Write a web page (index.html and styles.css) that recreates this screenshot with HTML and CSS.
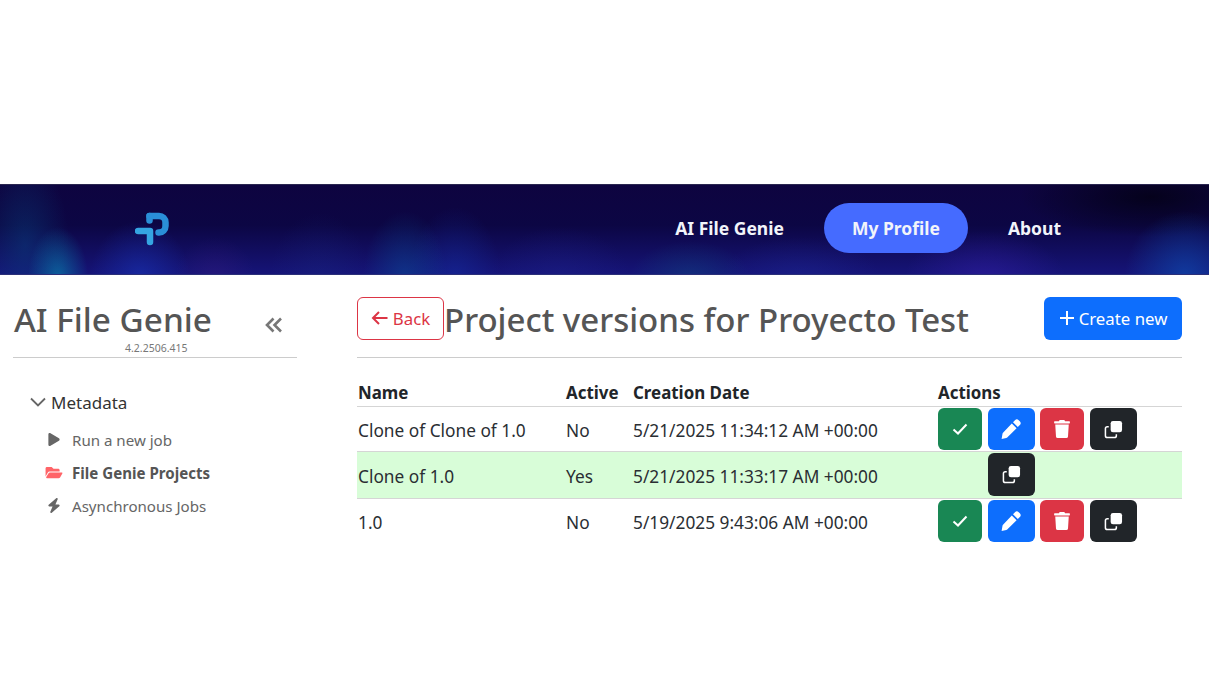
FILE: index.html
```html
<!DOCTYPE html>
<html>
<head>
<meta charset="utf-8">
<title>AI File Genie</title>
<link rel="stylesheet" href="styles.css">
</head>

<body>
<div class="top_bar">
	<svg class="logo" viewBox="0 0 34 34" width="34" height="34">
		<path class="logo_p" d="M14.500 4H24a6.500 6.500 0 0 1 6.500 6.500v3.500a6.500 6.500 0 0 1-6.500 6.500h-.5" />
		<path class="logo_p" d="M14.500 4V8.500" />
		<path class="logo_t" d="M3 19H15V30" />
	</svg>
	<ul class="nav">
		<li><a href="#">AI File Genie</a></li>
		<li class="on"><a href="#">My Profile</a></li>
		<li><a href="#">About</a></li>
	</ul>
</div>

<div class="wrap">
	<div class="side">
		<div class="side_head">
			<div class="side_title">
				<h2>AI File Genie</h2>
				<svg class="collapse" viewBox="0 0 18 16" width="18" height="16"><path d="M8.500 1.500 2 8l6.500 6.500M16 1.500 9.500 8l6.500 6.500" /></svg>
			</div>
			<p class="version">4.2.2506.415</p>
		</div>
		<div class="tree_head">
			<svg viewBox="0 0 16 10" width="16" height="10"><path d="M1 1.500 8 8.500 15 1.500" /></svg>
			<span>Metadata</span>
		</div>
		<ul class="tree">
			<li>
				<svg viewBox="0 0 384 512"><path d="M73 39c-14.800-9.100-33.400-9.400-48.500-.9S0 62.600 0 80V432c0 17.400 9.400 33.400 24.500 41.900s33.700 8.100 48.500-.9L361 297c14.300-8.700 23-24.200 23-41s-8.700-32.200-23-41L73 39z" /></svg>
				<a href="#">Run a new job</a>
			</li>
			<li class="cur">
				<svg viewBox="0 0 576 512"><path d="M572.694 292.093L500.270 416.248A63.997 63.997 0 0 1 444.989 448H45.025c-18.523 0-30.064-20.093-20.731-36.093l72.424-124.155A64 64 0 0 1 152 256h399.964c18.523 0 30.064 20.093 20.730 36.093zM152 224h328v-48c0-26.510-21.490-48-48-48H272l-64-64H48C21.490 64 0 85.490 0 112v278.046l69.077-118.418C86.214 242.250 117.989 224 152 224z" /></svg>
				<a href="#">File Genie Projects</a>
			</li>
			<li>
				<svg viewBox="0 0 448 512"><path d="M349.400 44.600c5.900-13.700 1.500-29.700-10.600-38.500s-28.600-8-39.900 1.800l-256 224c-10 8.800-13.600 22.900-8.900 35.300S50.700 288 64 288H175.500L98.600 467.400c-5.900 13.700-1.500 29.700 10.600 38.500s28.600 8 39.900-1.800l256-224c10-8.800 13.600-22.900 8.900-35.300s-16.600-20.700-30-20.700H272.500L349.400 44.600z" /></svg>
				<a href="#">Asynchronous Jobs</a>
			</li>
		</ul>
	</div>

	<div class="main">
		<div class="main_head">
			<a class="btn btn_back" href="#">
				<svg viewBox="0 0 18 16" width="18" height="16"><path d="M16.500 8H2M8 2 2 8l6 6" /></svg>
				Back
			</a>
			<h1>Project versions for Proyecto Test</h1>
			<a class="btn btn_new" href="#">
				<svg viewBox="0 0 16 16" width="16" height="16"><path d="M8 1v14M1 8h14" /></svg>
				Create new
			</a>
		</div>

		<table class="list">
			<colgroup>
				<col class="col_name"><col class="col_active"><col class="col_date"><col>
			</colgroup>
			<thead>
				<tr><th>Name</th><th>Active</th><th>Creation Date</th><th>Actions</th></tr>
			</thead>
			<tbody>
				<tr>
					<td>Clone of Clone of 1.0</td>
					<td>No</td>
					<td>5/21/2025 11:34:12 AM +00:00</td>
					<td class="td_acts">
						<div class="acts">
							<a class="act act_ok" href="#"><svg class="ico_check" viewBox="0 0 16 12" width="16" height="12"><path d="M1.500 6.500 6 10.500 14.500 1.500" /></svg></a>
							<a class="act act_edit" href="#"><svg viewBox="0 0 20 20" width="20" height="20"><path d="M14 1.200a2.600 2.600 0 0 1 3.700 0l1.100 1.100a2.600 2.600 0 0 1 0 3.700l-2 2-4.800-4.800zM10.800 4.400l4.800 4.800L6.200 18.600a2 2 0 0 1-.9.500L.6 20 1.500 14.800a2 2 0 0 1 .5-1z" /></svg></a>
							<a class="act act_del" href="#"><svg viewBox="0 0 448 512" width="16" height="18"><path d="M432 32H312l-9.400-18.700A24 24 0 0 0 281.100 0H166.800a23.720 23.720 0 0 0-21.400 13.300L136 32H16A16 16 0 0 0 0 48v32a16 16 0 0 0 16 16h416a16 16 0 0 0 16-16V48a16 16 0 0 0-16-16zM53.200 467a48 48 0 0 0 47.900 45h245.800a48 48 0 0 0 47.900-45L416 128H32z" /></svg></a>
							<a class="act act_copy" href="#"><svg viewBox="0 0 20 20" width="19" height="19"><rect x="7" y="1" width="12" height="12" rx="2.500" /><path class="copy_back" d="M5 7H3.500A2 2 0 0 0 1.500 9v7.500a2 2 0 0 0 2 2H11a2 2 0 0 0 2-2V15" /></svg></a>
						</div>
					</td>
				</tr>
				<tr class="row_on">
					<td>Clone of 1.0</td>
					<td>Yes</td>
					<td>5/21/2025 11:33:17 AM +00:00</td>
					<td class="td_acts">
						<div class="acts">
							<a class="act act_copy act_only" href="#"><svg viewBox="0 0 20 20" width="19" height="19"><rect x="7" y="1" width="12" height="12" rx="2.500" /><path class="copy_back" d="M5 7H3.500A2 2 0 0 0 1.500 9v7.500a2 2 0 0 0 2 2H11a2 2 0 0 0 2-2V15" /></svg></a>
						</div>
					</td>
				</tr>
				<tr>
					<td>1.0</td>
					<td>No</td>
					<td>5/19/2025 9:43:06 AM +00:00</td>
					<td class="td_acts">
						<div class="acts">
							<a class="act act_ok" href="#"><svg class="ico_check" viewBox="0 0 16 12" width="16" height="12"><path d="M1.500 6.500 6 10.500 14.500 1.500" /></svg></a>
							<a class="act act_edit" href="#"><svg viewBox="0 0 20 20" width="20" height="20"><path d="M14 1.200a2.600 2.600 0 0 1 3.700 0l1.100 1.100a2.600 2.600 0 0 1 0 3.700l-2 2-4.800-4.800zM10.800 4.400l4.800 4.800L6.200 18.600a2 2 0 0 1-.9.500L.6 20 1.500 14.800a2 2 0 0 1 .5-1z" /></svg></a>
							<a class="act act_del" href="#"><svg viewBox="0 0 448 512" width="16" height="18"><path d="M432 32H312l-9.400-18.700A24 24 0 0 0 281.100 0H166.800a23.720 23.720 0 0 0-21.400 13.300L136 32H16A16 16 0 0 0 0 48v32a16 16 0 0 0 16 16h416a16 16 0 0 0 16-16V48a16 16 0 0 0-16-16zM53.200 467a48 48 0 0 0 47.900 45h245.800a48 48 0 0 0 47.900-45L416 128H32z" /></svg></a>
							<a class="act act_copy" href="#"><svg viewBox="0 0 20 20" width="19" height="19"><rect x="7" y="1" width="12" height="12" rx="2.500" /><path class="copy_back" d="M5 7H3.500A2 2 0 0 0 1.500 9v7.500a2 2 0 0 0 2 2H11a2 2 0 0 0 2-2V15" /></svg></a>
						</div>
					</td>
				</tr>
			</tbody>
		</table>
	</div>
</div>
</body>
</html>
```

FILE: styles.css
```css
body,div,h1,h2,p,ul,li {margin: 0;padding: 0;}
body {padding-top: 184px;font-family: "Noto Sans","Open Sans","Liberation Sans",sans-serif;color: #212529;background: #fff;}
ul {list-style: none;}
a {text-decoration: none;color: inherit;}

.top_bar {display: flex;align-items: center;justify-content: space-between;height: 91px;padding: 0 120px 0 135px;box-sizing: border-box;border-top: 1px solid #2a2650;border-bottom: 1px solid #2b2f78;
	background-color: #0a0638;
	background-image:
		radial-gradient(ellipse 30px 50px at 58px 92px,rgba(8,125,170,.7),transparent),
		radial-gradient(ellipse 44px 90px at 25px 60px,rgba(8,70,130,.45),transparent),
		radial-gradient(ellipse 50px 56px at 140px 92px,rgba(25,55,190,.55),transparent),
		radial-gradient(ellipse 40px 40px at 215px 92px,rgba(60,30,130,.35),transparent),
		radial-gradient(ellipse 50px 64px at 320px 92px,rgba(25,40,130,.35),transparent),
		radial-gradient(ellipse 42px 66px at 405px 92px,rgba(10,80,155,.5),transparent),
		radial-gradient(ellipse 46px 70px at 455px 92px,rgba(20,50,170,.45),transparent),
		radial-gradient(ellipse 70px 50px at 560px 92px,rgba(30,35,140,.4),transparent),
		radial-gradient(ellipse 60px 36px at 690px 92px,rgba(15,75,130,.45),transparent),
		radial-gradient(ellipse 80px 40px at 800px 92px,rgba(30,40,150,.45),transparent),
		radial-gradient(ellipse 80px 46px at 985px 92px,rgba(50,30,165,.55),transparent),
		radial-gradient(ellipse 60px 64px at 1185px 90px,rgba(15,70,170,.75),transparent),
		radial-gradient(ellipse 130px 40px at 1150px 12px,rgba(0,0,8,.65),transparent),
		linear-gradient(180deg,#0e0440 0,#0c0644 45%,#161478 100%);
}
.logo {display: block;flex: none;margin-top: -1px;}
.logo path {fill: none;stroke-width: 6.500;stroke-linecap: round;stroke-linejoin: round;}
.logo_p {stroke: #2a8fd8;}
.logo_t {stroke: #35a5e2;}
.nav {display: flex;align-items: center;gap: 12px;margin-top: -4px;}
.nav a {display: block;height: 50px;padding: 0 28px;font-size: 17.500px;font-weight: 700;line-height: 50px;color: #f2f4fa;border-radius: 25px;}
.nav .on a {background-color: #456bff;}

.wrap {display: flex;}
.side {flex: none;width: 357px;box-sizing: border-box;padding: 22px 60px 0 13px;}
.side_head {height: 60px;border-bottom: 1px solid #ccc;}
.side_title {display: flex;align-items: center;justify-content: space-between;padding: 0 14px 0 1px;height: 46px;}
.side_title h2 {font-size: 33.300px;font-weight: 500;line-height: 44px;color: #555;margin-top: -2px;}
.collapse {margin-top: 10px;}
.collapse path {fill: none;stroke: #777;stroke-width: 2.600;}
.version {font-size: 10.500px;line-height: 12px;color: #777;padding-left: 112px;margin-top: -1px;}
.tree_head {display: flex;align-items: center;gap: 5px;margin: 32px 0 0 17px;height: 24px;font-size: 17px;color: #333;}
.tree_head path {fill: none;stroke: #666;stroke-width: 1.800;}
.tree {margin: 9px 0 0 32px;}
.tree li {display: flex;align-items: center;height: 33px;font-size: 15.100px;color: #666;}
.tree svg {flex: none;width: 18px;height: 15px;margin-right: 9px;fill: #666;}
.tree .cur {font-weight: 700;color: #555;}
.tree .cur svg {fill: #ff6468;}

.main {flex: none;width: 825px;}
.main_head {display: flex;align-items: center;height: 83px;border-bottom: 1px solid #ccc;box-sizing: border-box;margin-bottom: 20px;}
.main_head h1 {flex: 1;font-size: 33px;font-weight: 500;line-height: 46px;color: #555;margin-top: 8px;}
.btn {display: flex;align-items: center;justify-content: center;gap: 4px;box-sizing: border-box;height: 43px;font-size: 16.800px;border-radius: 6px;margin-top: 4px;}
.btn path {fill: none;stroke: currentColor;stroke-width: 2;}
.btn_back {flex: none;width: 87px;color: #dc3545;border: 1px solid #dc3545;}
.btn_new {flex: none;width: 138px;color: #fff;background-color: #0d6efd;}

.list {width: 825px;table-layout: fixed;border-collapse: collapse;font-size: 17.300px;color: #2a2e33;}
.col_name {width: 208px;}
.col_active {width: 67px;}
.col_date {width: 305px;}
.list th {padding: 0 1px;height: 28px;font-size: 16.900px;font-weight: 700;text-align: left;color: #212529;border-bottom: 1px solid #d5d5d5;}
.list td {padding: 2px 1px 0;height: 42px;border-bottom: 1px solid #d5d5d5;}
.list .td_acts {padding: 1px;}
.list .row_on td {height: 44px;background-color: #d8fdd8;}
.list .row_on .td_acts {padding: 0 1px 2px;}
.list tbody tr:last-child td {border-bottom: 0 none;}
.acts {display: flex;gap: 5.500px;}
.act {display: flex;align-items: center;justify-content: center;width: 44px;height: 42px;border-radius: 6px;}
.act svg {fill: #fff;}
.act_ok {background-color: #198754;}
.act_edit {width: 47px;background-color: #0d6efd;}
.act_del {background-color: #dc3545;}
.act_copy {width: 47px;background-color: #212529;}
.act_only {height: 43px;margin-left: 50px;}
.ico_check path {fill: none;stroke: #fff;stroke-width: 2;}
.act .copy_back {fill: none;stroke: #fff;stroke-width: 1.600;}
```
